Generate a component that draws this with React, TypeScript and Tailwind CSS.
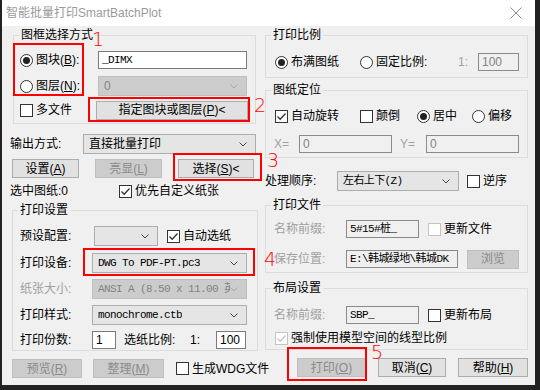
import type { ReactNode } from "react";

const mono = "font-['Liberation_Mono','Noto_Sans_CJK_SC',monospace] text-[11px] tracking-[-0.6px]";

function Radio({ checked, label, className = "" }: { checked?: boolean; label: ReactNode; className?: string }) {
  return (
    <div className={`flex items-center gap-[3px] ${className}`}>
      <span className="flex h-[13px] w-[13px] shrink-0 items-center justify-center rounded-full border border-[#333] bg-white">
        {checked && <span className="h-[7px] w-[7px] rounded-full bg-[#222]" />}
      </span>
      <span className="whitespace-nowrap">{label}</span>
    </div>
  );
}

function Check({ checked, disabled, label, className = "" }: { checked?: boolean; disabled?: boolean; label: ReactNode; className?: string }) {
  return (
    <div className={`flex items-center gap-[3px] ${className}`}>
      <span className={`flex h-[13px] w-[13px] shrink-0 items-center justify-center border bg-white ${disabled ? "border-[#c4c4c4]" : "border-[#333]"}`}>
        {checked && (
          <svg width="11" height="11" viewBox="0 0 11 11">
            <polyline points="1.5,5.5 4.2,8.3 9.5,2.5" fill="none" stroke={disabled ? "#c4c4c4" : "#333"} strokeWidth="1.3" />
          </svg>
        )}
      </span>
      <span className="whitespace-nowrap">{label}</span>
    </div>
  );
}

function Select({ value, disabled, className = "", textClass = "" }: { value?: ReactNode; disabled?: boolean; className?: string; textClass?: string }) {
  return (
    <div
      className={`flex h-[20px] items-center justify-between border pl-[5px] pr-[8px] ${
        disabled ? "border-[#bfbfbf] bg-[#cccccc] text-[#838383]" : "border-[#adadad] bg-[#e5e5e5] text-black"
      } ${className}`}
    >
      <span className={`overflow-hidden whitespace-nowrap ${textClass}`}>{value}</span>
      <svg width="8" height="5" viewBox="0 0 8 5" className="shrink-0">
        <polyline points="0.5,0.5 4,4 7.5,0.5" fill="none" stroke={disabled ? "#a8a8a8" : "#444"} strokeWidth="1" />
      </svg>
    </div>
  );
}

function Field({ value, disabled, className = "", textClass = "" }: { value?: ReactNode; disabled?: boolean; className?: string; textClass?: string }) {
  return (
    <div
      className={`flex h-[18px] items-center overflow-hidden whitespace-nowrap border px-[3px] ${
        disabled ? "border-[#8a8a8a] bg-[#f0f0f0]" : "border-[#7a7a7a] bg-white"
      } ${textClass} ${className}`}
    >
      {value}
    </div>
  );
}

function Btn({ children, disabled, className = "" }: { children: ReactNode; disabled?: boolean; className?: string }) {
  return (
    <button
      type="button"
      className={`flex h-[19px] shrink-0 items-center justify-center border ${
        disabled ? "border-[#bfbfbf] bg-[#cccccc] text-[#8a8a8a]" : "border-[#adadad] bg-[#e1e1e1] text-black"
      } ${className}`}
    >
      {children}
    </button>
  );
}

function Group({ title, children, className = "" }: { title: string; children: ReactNode; className?: string }) {
  return (
    <fieldset className={`border border-[#dcdcdc] ${className}`}>
      <legend className="ml-[5px] px-[2px] leading-[16px]">{title}</legend>
      {children}
    </fieldset>
  );
}

function Mark({ n, className }: { n: string; className: string }) {
  return (
    <span className={`absolute font-['DejaVu_Sans',sans-serif] text-[19px] font-extralight leading-[20px] text-[#ff0000] ${className}`}>
      {n}
    </span>
  );
}

export default function App() {
  return (
    <div className="h-[390px] w-[540px] bg-[#222]">
      <div className="relative ml-[2px] h-[385px] w-[533px] bg-[#f0f0f0] font-['Liberation_Sans','Noto_Sans_CJK_SC',sans-serif] text-[12px] leading-[16px] text-black">
        {/* title bar */}
        <div className="flex h-[26px] items-center justify-between bg-white pl-[4px] pr-[13px]">
          <span className="text-[12px] text-[#9a9a9a]">智能批量打印SmartBatchPlot</span>
          <svg width="12" height="12" viewBox="0 0 12 12">
            <path d="M0.5 0.5 L11.5 11.5 M11.5 0.5 L0.5 11.5" stroke="#8a8a8a" strokeWidth="1" />
          </svg>
        </div>

        <div className="flex pl-[8px]">
          {/* left column */}
          <div className="flex w-[248px] flex-col">
            <Group title="图框选择方式" className="ml-[3px] mt-[1px] w-[243px] pb-[3px]">
              <div className="mt-[7px] flex h-[20px] items-center pl-[6px]">
                <Radio checked label={<>图块(<u>B</u>):</>} className="w-[78px]" />
                <Field value="_DIMX" className="w-[149px]" textClass={mono} />
              </div>
              <div className="mt-[6px] flex h-[20px] items-center pl-[6px]">
                <Radio label={<>图层(<u>N</u>):</>} className="w-[78px]" />
                <Select value="0" disabled className="w-[149px]" />
              </div>
              <div className="mt-[4px] flex h-[20px] items-center pl-[6px]">
                <Check label="多文件" className="w-[76px]" />
                <Btn className="w-[152px]">指定图块或图层(<u>P</u>)&lt;</Btn>
              </div>
            </Group>

            <div className="mt-[10px] flex h-[20px] items-center">
              <span className="w-[73px]">输出方式:</span>
              <Select value="直接批量打印" className="w-[173px]" />
            </div>

            <div className="mt-[5px] flex items-center">
              <Btn className="ml-[2px] w-[67px]">设置(<u>A</u>)</Btn>
              <Btn disabled className="ml-[16px] w-[67px]">亮显(<u>L</u>)</Btn>
              <Btn className="ml-[16px] w-[76px]">选择(<u>S</u>)&lt;</Btn>
            </div>

            <div className="mt-[5px] flex h-[16px] items-center">
              <span className="w-[109px]">选中图纸:0</span>
              <Check checked label="优先自定义纸张" />
            </div>

            <Group title="打印设置" className="ml-[2px] mt-[3px] w-[246px] pb-[1px]">
              <div className="mt-[8px] flex h-[20px] items-center pl-[7px]">
                <span className="w-[74px]">预设配置:</span>
                <Select className="w-[64px]" />
                <Check checked label="自动选纸" className="ml-[9px]" />
              </div>
              <div className="mt-[7px] flex h-[20px] items-center pl-[7px]">
                <span className="w-[72px]">打印设备:</span>
                <Select value="DWG To PDF-PT.pc3" className="w-[155px]" textClass={mono} />
              </div>
              <div className="mt-[6px] flex h-[20px] items-center pl-[7px]">
                <span className="w-[72px] text-[#a0a0a0]">纸张大小:</span>
                <Select value="ANSI A (8.50 x 11.00 英寸)" disabled className="w-[155px]" textClass={mono} />
              </div>
              <div className="mt-[6px] flex h-[20px] items-center pl-[7px]">
                <span className="w-[72px]">打印样式:</span>
                <Select value="monochrome.ctb" className="w-[155px]" textClass={mono} />
              </div>
              <div className="mt-[5px] flex h-[19px] items-center pl-[7px]">
                <span className="w-[72px]">打印份数:</span>
                <Field value="1" className="w-[24px]" />
                <span className="ml-[8px] w-[66px]">选纸比例:</span>
                <span className="w-[26px]">1:</span>
                <Field value="100" className="w-[30px]" />
              </div>
            </Group>

            <div className="mt-[8px] flex items-center">
              <Btn disabled className="ml-[2px] w-[70px]">预览(<u>R</u>)</Btn>
              <Btn disabled className="ml-[11px] w-[71px]">整理(<u>M</u>)</Btn>
              <Check label="生成WDG文件" className="ml-[12px]" />
            </div>
          </div>

          {/* right column */}
          <div className="ml-[7px] flex w-[263px] flex-col">
            <Group title="打印比例" className="mt-[1px] pb-[5px]">
              <div className="mt-[9px] flex h-[20px] items-center pl-[9px]">
                <Radio checked label="布满图纸" className="w-[85px]" />
                <Radio label="固定比例:" className="w-[98px]" />
                <span className="w-[20px] text-[#a0a0a0]">1:</span>
                <Field value="100" disabled className="w-[41px] text-[#838383]" />
              </div>
            </Group>

            <Group title="图纸定位" className="mt-[4px] pb-[3px]">
              <div className="mt-[8px] flex h-[20px] items-center pl-[9px]">
                <Check checked label="自动旋转" className="w-[85px]" />
                <Check label="颠倒" className="w-[57px]" />
                <Radio checked label="居中" className="w-[55px]" />
                <Radio label="偏移" />
              </div>
              <div className="mt-[8px] flex h-[20px] items-center pl-[8px]">
                <span className="w-[25px] text-[#a0a0a0]">X=</span>
                <Field value="0" disabled className="w-[93px] text-[#838383]" />
                <span className="ml-[8px] w-[26px] text-[#a0a0a0]">Y=</span>
                <Field value="0" disabled className="w-[93px] text-[#838383]" />
              </div>
            </Group>

            <div className="mt-[13px] flex h-[20px] items-center">
              <span className="w-[72px]">处理顺序:</span>
              <Select value="左右上下(Z)" className="w-[122px]" textClass={mono} />
              <Check label="逆序" className="ml-[8px]" />
            </div>

            <Group title="打印文件" className="mt-[6px] pb-[3px]">
              <div className="mt-[6px] flex h-[20px] items-center pl-[8px]">
                <span className="w-[72px] text-[#a0a0a0]">名称前缀:</span>
                <Field value="5#15#桩_" disabled className="w-[73px]" textClass={mono} />
                <Check disabled label="更新文件" className="ml-[9px]" />
              </div>
              <div className="mt-[10px] flex h-[20px] items-center pl-[8px]">
                <span className="w-[72px] text-[#a0a0a0]">保存位置:</span>
                <Field value="E:\韩城绿地\韩城DK" disabled className="w-[112px]" textClass={mono} />
                <Btn disabled className="ml-[9px] w-[52px]">浏览</Btn>
              </div>
            </Group>

            <Group title="布局设置" className="mt-[7px] pb-[2px]">
              <div className="mt-[9px] flex h-[20px] items-center pl-[8px]">
                <span className="w-[72px] text-[#a0a0a0]">名称前缀:</span>
                <Field value="SBP_" disabled className="w-[73px]" textClass={mono} />
                <Check label="更新布局" className="ml-[9px]" />
              </div>
              <div className="mt-[4px] flex h-[18px] items-center pl-[9px]">
                <Check checked disabled label="强制使用模型空间的线型比例" />
              </div>
            </Group>

            <div className="mt-[8px] flex items-center">
              <Btn disabled className="ml-[32px] w-[69px]">打印(<u>O</u>)</Btn>
              <Btn className="ml-[12px] w-[68px]">取消(<u>C</u>)</Btn>
              <Btn className="ml-[12px] w-[70px]">帮助(<u>H</u>)</Btn>
            </div>
          </div>
        </div>

        {/* red annotations */}
        <div className="absolute left-[11px] top-[43px] h-[53px] w-[71px] border-2 border-[#ff0000]" />
        <Mark n="1" className="left-[90px] top-[29px]" />
        <div className="absolute left-[86px] top-[97px] h-[25px] w-[162px] border-2 border-[#ff0000]" />
        <Mark n="2" className="left-[252px] top-[95px]" />
        <div className="absolute left-[171px] top-[153px] h-[28px] w-[89px] border-2 border-[#ff0000]" />
        <Mark n="3" className="left-[265px] top-[150px]" />
        <div className="absolute left-[81px] top-[248px] h-[28px] w-[172px] border-2 border-[#ff0000]" />
        <Mark n="4" className="left-[262px] top-[249px]" />
        <div className="absolute left-[285px] top-[347px] h-[34px] w-[80px] border-2 border-[#ff0000]" />
        <Mark n="5" className="left-[369px] top-[342px]" />
      </div>
    </div>
  );
}
